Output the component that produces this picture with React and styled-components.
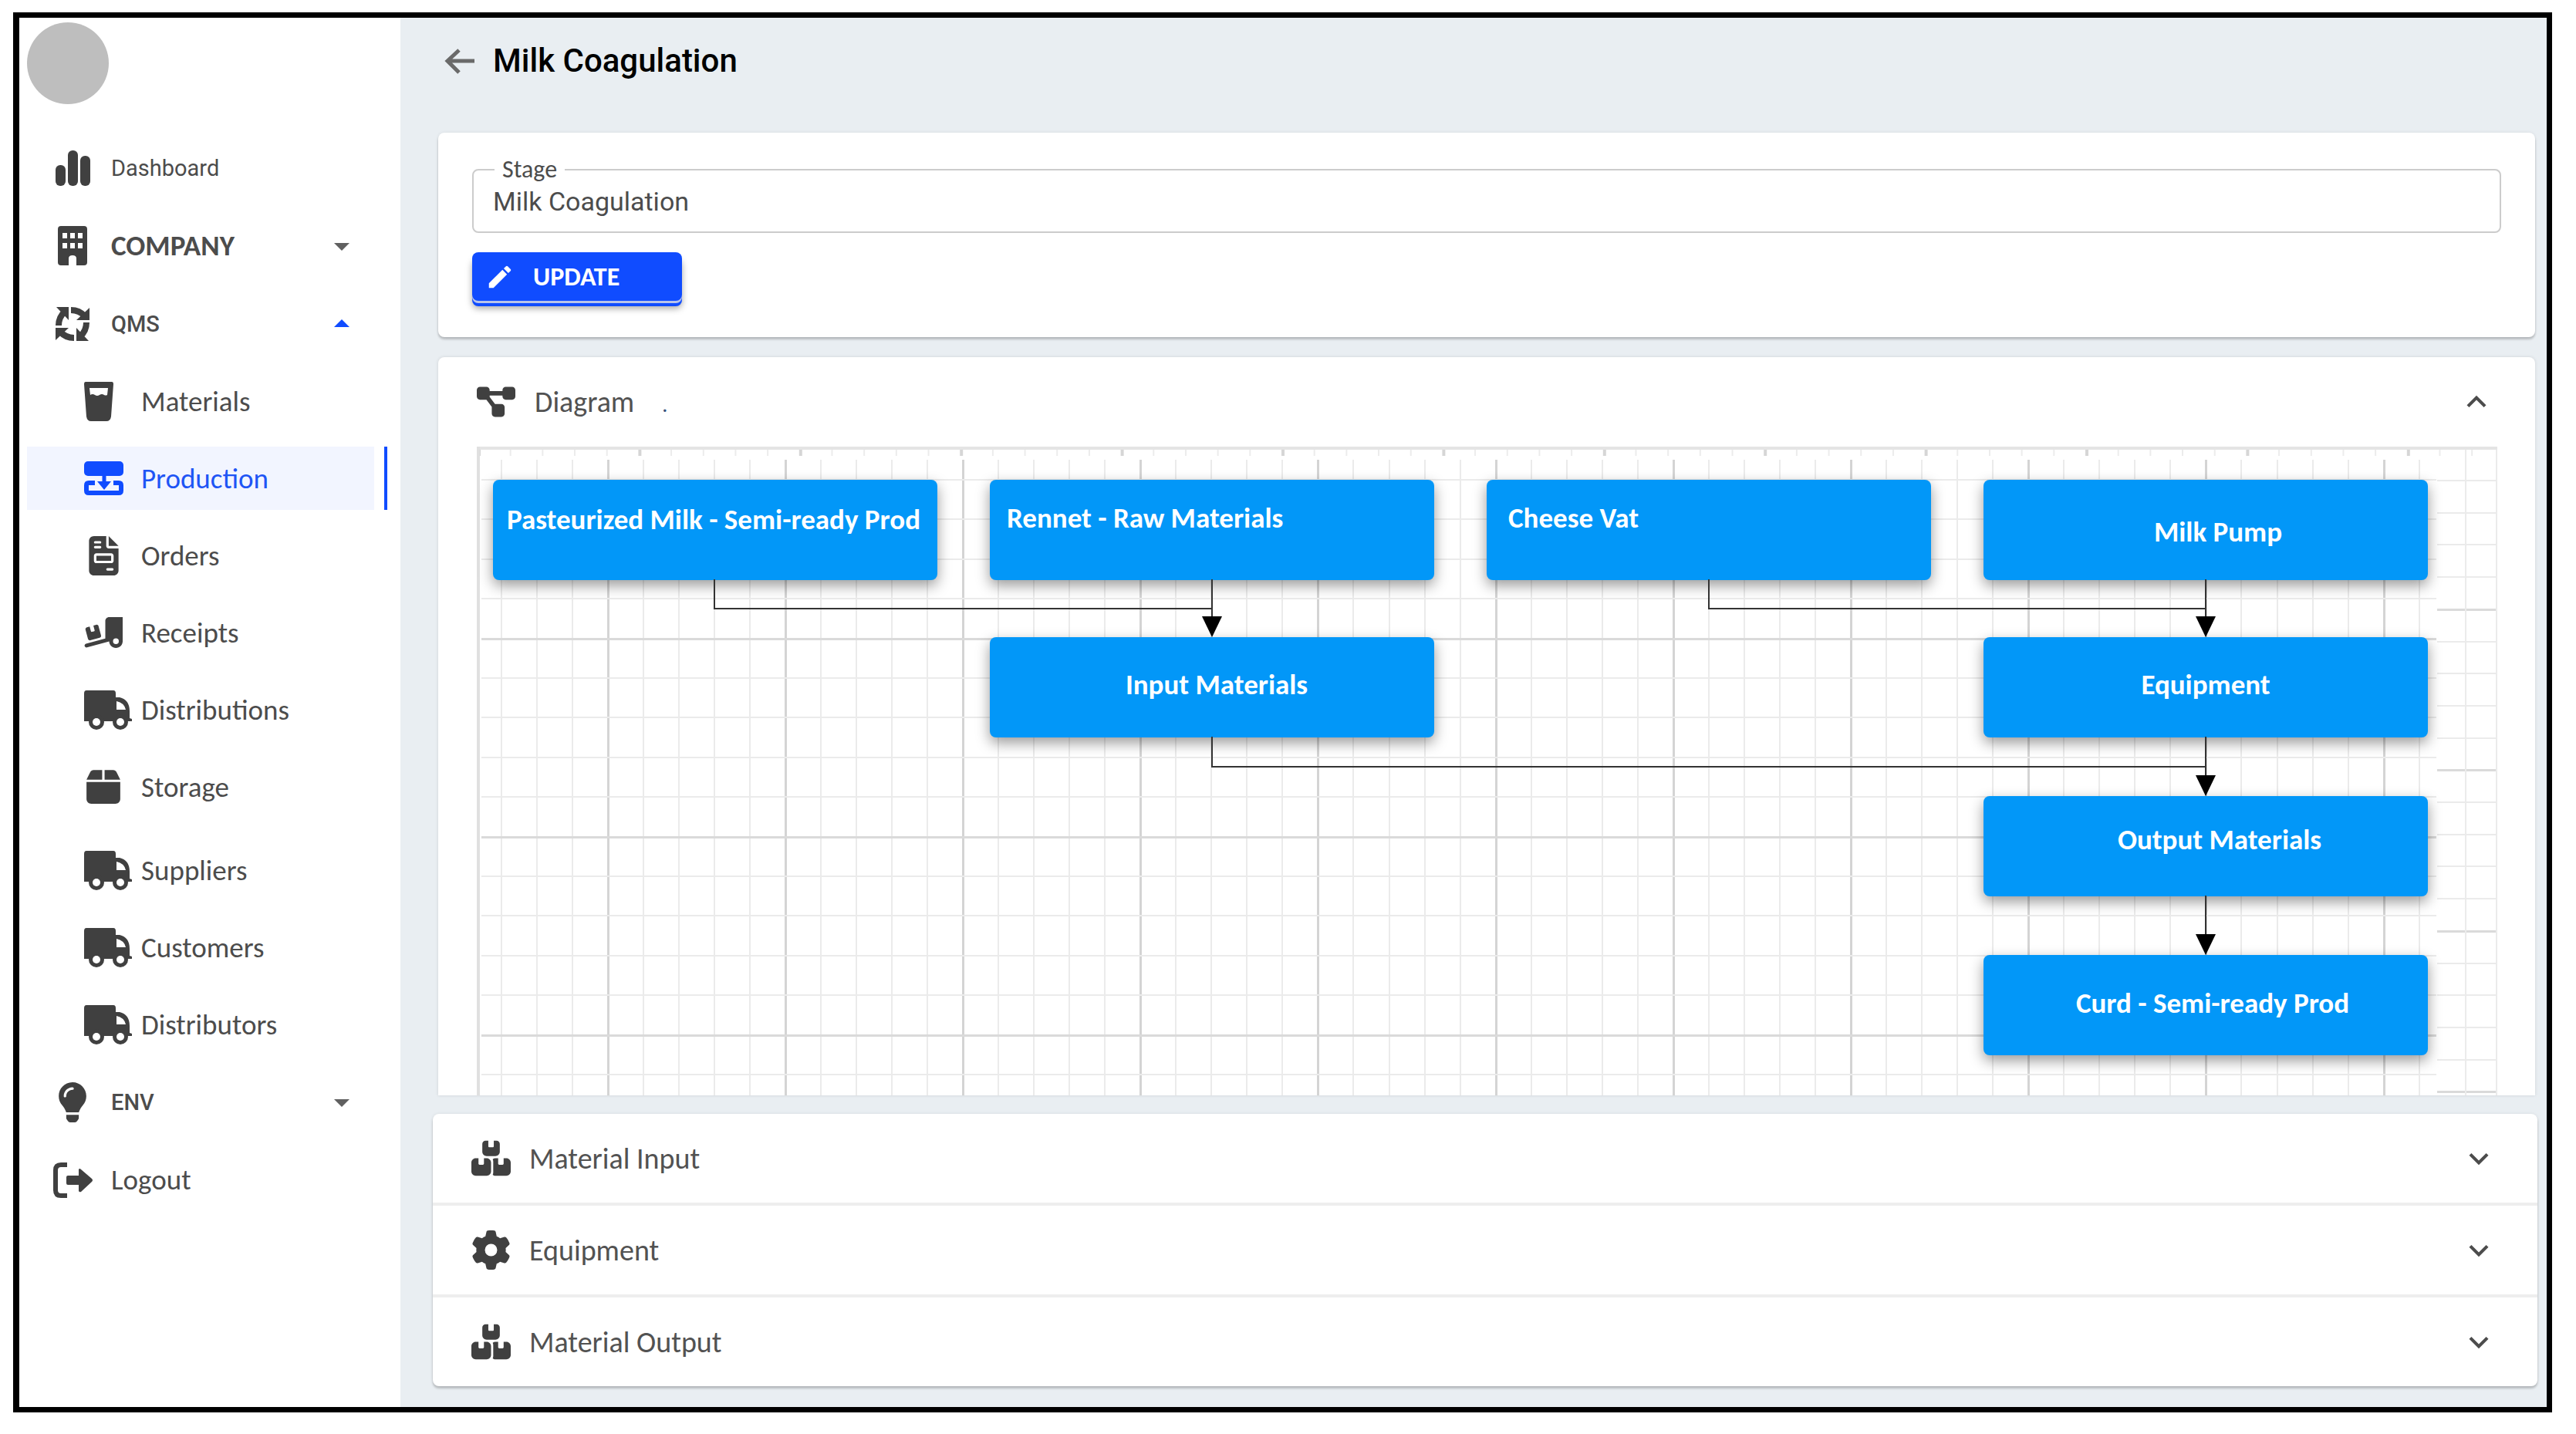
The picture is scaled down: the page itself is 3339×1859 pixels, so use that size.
import React from 'react';
import styled, { createGlobalStyle } from 'styled-components';
import { FaLightbulb } from 'react-icons/fa';
import { FaBox, FaBoxesStacked, FaDiagramProject, FaFileInvoice, FaGear, FaTruckRampBox } from 'react-icons/fa6';
import { MdArrowDropDown, MdArrowDropUp, MdEdit, MdExpandLess, MdExpandMore } from 'react-icons/md';

const GlobalStyle = createGlobalStyle`
  * {
    box-sizing: border-box;
  }

  body {
    margin: 0;
    background: #ffffff;
    color: #4c4c4c;
    font-family: Carlito, Lato, sans-serif;
    font-size: 37px;
  }

  button,
  input {
    font: inherit;
    color: inherit;
    background: none;
    border: none;
    padding: 0;
  }

  button {
    cursor: pointer;
  }

  svg {
    display: block;
    flex: none;
  }
`;

const Frame = styled.div`
  display: flex;
  margin: 16px 31px 28px 17px;
  border: 7px solid #000000;
  border-left-width: 8px;
`;

/* Sidebar */

const Sidebar = styled.nav`
  flex: none;
  width: 494px;
  padding-top: 6px;
  background: #ffffff;
`;

const Avatar = styled.div`
  width: 106px;
  height: 106px;
  margin: 0 0 32px 10px;
  border-radius: 50%;
  background: #bebebe;
`;

const NavList = styled.ul`
  list-style: none;
  margin: 0;
  padding: 0;
`;

const SubList = styled(NavList)`
  & + & {
    margin-top: 8px;
  }
`;

const NavItem = styled.li`
  display: flex;
  align-items: center;
  gap: 13px;
  height: ${({ $sub }) => ($sub ? 100 : 101)}px;
  padding: 0 17px 0 10px;
`;

const NavLink = styled.a`
  flex: 1;
  display: flex;
  align-items: center;
  height: 82px;
  padding: 0 18px 0 ${({ $sub }) => ($sub ? 74 : 33)}px;
  background: ${({ $active }) => ($active ? '#f2f5ff' : 'transparent')};
  color: ${({ $active }) => ($active ? '#1f55f5' : '#4c4c4c')};
  text-align: left;
  text-decoration: none;
`;

const NavIcon = styled.span`
  display: flex;
  justify-content: ${({ $sub }) => ($sub ? 'flex-start' : 'center')};
  width: ${({ $sub }) => ($sub ? 62 : 52)}px;
  margin-right: ${({ $sub }) => ($sub ? 12 : 24)}px;
  color: ${({ $active }) => ($active ? '#104cff' : '#404040')};

  svg {
    width: auto;
    height: ${({ $height }) => $height}px;
  }
`;

const NavText = styled.span`
  flex: 1;
  font-family: ${({ $kind }) => ($kind === 'roboto' || $kind === 'robotoMedium' ? 'Roboto, sans-serif' : 'inherit')};
  font-size: ${({ $kind }) => ($kind === 'roboto' || $kind === 'robotoMedium' ? 29 : 37)}px;
  font-weight: ${({ $kind }) => ({ bold: 700, robotoMedium: 500 }[$kind] || 400)};
`;

const Caret = styled.span`
  color: ${({ $open }) => ($open ? '#104cff' : '#606060')};
`;

const ActiveMarker = styled.span`
  width: 4px;
  height: 82px;
  background: ${({ $active }) => ($active ? '#104cff' : 'transparent')};
`;

/* Main column */

const Main = styled.main`
  flex: 1;
  min-width: 0;
  padding: 0 15px 27px 49px;
  background: #e9eef2;
`;

const PageHeader = styled.header`
  display: flex;
  align-items: center;
  gap: 24px;
  padding: 28px 0 65px 8px;
`;

const BackButton = styled.button`
  color: #6a6a6a;
`;

const PageTitle = styled.h1`
  margin: 0;
  color: #000000;
  font-family: Roboto, sans-serif;
  font-size: 42px;
  font-weight: 500;
  line-height: 56px;
`;

const Card = styled.section`
  background: #ffffff;
  border-radius: 8px;
  box-shadow: 0 3px 3px rgba(0, 0, 0, 0.2), 0 0 4px rgba(0, 0, 0, 0.08);
`;

const StageCard = styled(Card)`
  padding: 32px 44px 47px;
`;

const Field = styled.fieldset`
  margin: 0;
  padding: 0 25px;
  border: 2px solid #cccccc;
  border-radius: 8px;
`;

const FieldLabel = styled.legend`
  margin-left: 2px;
  padding: 0 10px;
  font-size: 32px;
  line-height: 32px;
`;

const FieldInput = styled.input`
  display: block;
  width: 100%;
  height: 64px;
  padding-bottom: 14px;
  font-family: Roboto, sans-serif;
  font-size: 34px;
  outline: none;
`;

const UpdateButton = styled.button`
  display: flex;
  align-items: center;
  gap: 24px;
  min-width: 272px;
  height: 63px;
  margin-top: 25px;
  padding: 0 17px;
  border-radius: 8px;
  background: #104cff;
  color: #ffffff;
  font-size: 34px;
  font-weight: 700;
  box-shadow: 0 3px 0 #b9c4ea, 0 7px 0 #104cff, 0 10px 8px rgba(0, 0, 0, 0.35);
`;

const DiagramCard = styled(Card)`
  margin-top: 26px;
  border-radius: 8px 8px 0 0;
  box-shadow: 0 0 4px rgba(0, 0, 0, 0.12);
`;

const AccordionCard = styled(Card)`
  margin: 24px -3px 0 -7px;
`;

const AccordionHeader = styled.button`
  display: flex;
  align-items: center;
  gap: 17px;
  width: 100%;
  height: ${({ $open }) => ($open ? 116 : 115)}px;
  padding: 0 51px 0 50px;
  font-size: 38px;
  text-align: left;
`;

const AccordionRow = styled.div`
  & + & {
    border-top: 4px solid #eeeeee;
  }
`;

const AccordionIcon = styled.span`
  width: 58px;
  color: #404040;

  svg {
    width: auto;
    height: ${({ $height }) => $height}px;
  }
`;

const AccordionTitle = styled.span`
  flex: 1;
  color: #525252;
`;

const TitleDot = styled.span`
  margin-left: 36px;
  font-size: 28px;
  color: #33507a;
`;

/* Diagram */

const Canvas = styled.div`
  position: relative;
  height: 841px;
  margin: 0 49px 0 50px;
  overflow: hidden;
`;

const CanvasLayer = styled.svg`
  position: absolute;
  inset: 0;
  width: 100%;
  height: 100%;
`;

const Node = styled.div`
  position: absolute;
  left: ${({ $x }) => $x}px;
  top: ${({ $y }) => $y}px;
  display: flex;
  align-items: ${({ $lifted }) => ($lifted ? 'flex-start' : 'center')};
  justify-content: ${({ $align }) => $align || 'center'};
  width: 576px;
  height: 130px;
  padding: ${({ $pad }) => $pad};
  border-radius: 8px;
  background: #0297f8;
  box-shadow: 0 7px 18px rgba(0, 0, 0, 0.4);
  color: #ffffff;
  font-weight: 700;
  line-height: 48px;
  white-space: nowrap;
`;

const BarsIcon = () => (
  <svg viewBox="0 0 45 46" fill="currentColor">
    <rect x="0" y="19" width="13" height="27" rx="6" />
    <rect x="16" y="0" width="13" height="46" rx="6" />
    <rect x="32" y="7" width="13" height="39" rx="6" />
  </svg>
);

const BuildingIcon = () => (
  <svg viewBox="0 0 38 51" fill="currentColor" fillRule="evenodd">
    <path d="M4 0H34Q38 0 38 4V47Q38 51 34 51H24V42Q24 38 19 38Q14 38 14 42V51H4Q0 51 0 47V4Q0 0 4 0ZM6 9V16H12V9ZM16 9V16H22V9ZM26 9V16H32V9ZM6 22V29H12V22ZM16 22V29H22V22ZM26 22V29H32V22Z" />
  </svg>
);

const CycleIcon = () => (
  <svg viewBox="0 0 44 44">
    {[0, 90, 180, 270].map((angle) => (
      <g key={angle} transform={`rotate(${angle} 22 22)`}>
        <path d="M20 4Q31 4 38 12" fill="none" stroke="currentColor" strokeWidth="8" />
        <path d="M44 1V17H27Z" fill="currentColor" />
      </g>
    ))}
  </svg>
);

const CupIcon = () => (
  <svg viewBox="0 0 38 51" fill="currentColor" fillRule="evenodd">
    <path d="M2 0H36Q38 0 38 3L35 45Q34 51 29 51H9Q4 51 3 45L0 3Q0 0 2 0ZM7 8L8 17Q11 15 14 17Q17 19 20 17Q23 15 26 17Q28 18 30 17L31 8Z" />
  </svg>
);

const ProductionIcon = () => (
  <svg viewBox="0 0 51 44">
    <rect x="0" y="0" width="51" height="19" rx="5" fill="currentColor" />
    <path d="M26 18V28" stroke="currentColor" strokeWidth="5" />
    <path d="M17 26H35L26 37Z" fill="currentColor" />
    <path d="M14 28H6Q3 28 3 31V38Q3 41 6 41H45Q48 41 48 38V31Q48 28 45 28H38" fill="none" stroke="currentColor" strokeWidth="6" />
  </svg>
);

const TruckIcon = () => (
  <svg viewBox="0 0 62 51" fill="currentColor">
    <path fillRule="evenodd" d="M3 0H38Q41 0 41 4V9H46Q59 12 59 27V36L62 37V40H0V4Q0 0 3 0ZM42 14V25H54Q52 16 42 14Z" />
    <circle cx="16" cy="41" r="10" />
    <circle cx="47" cy="41" r="10" />
    <circle cx="16" cy="41" r="5" fill="#ffffff" />
    <circle cx="47" cy="41" r="5" fill="#ffffff" />
  </svg>
);

const LogoutIcon = () => (
  <svg viewBox="0 0 51 46">
    <path d="M18 3H10Q3 3 3 10V36Q3 43 10 43H18" fill="none" stroke="currentColor" strokeWidth="6" />
    <path d="M19 17H33V9Q34 7 36 9L50 21Q52 23 50 25L36 38Q34 39 33 37V29H19Q17 29 17 27V19Q17 17 19 17Z" fill="currentColor" />
  </svg>
);

const BackIcon = () => (
  <svg width="39" height="33" viewBox="0 0 39 33" fill="none" stroke="currentColor" strokeWidth="5">
    <path d="M39 16H4M19 2L4 16L19 31" />
  </svg>
);

const topItems = [
  { label: 'Dashboard', icon: <BarsIcon />, height: 46, kind: 'roboto' },
  { label: 'COMPANY', icon: <BuildingIcon />, height: 51, kind: 'bold', group: true },
  { label: 'QMS', icon: <CycleIcon />, height: 44, kind: 'robotoMedium', group: true, open: true },
];

const stockItems = [
  { label: 'Materials', icon: <CupIcon />, height: 51 },
  { label: 'Production', icon: <ProductionIcon />, height: 44, active: true },
  { label: 'Orders', icon: <FaFileInvoice />, height: 51 },
  { label: 'Receipts', icon: <FaTruckRampBox />, height: 50 },
  { label: 'Distributions', icon: <TruckIcon />, height: 51 },
  { label: 'Storage', icon: <FaBox />, height: 50 },
];

const partnerItems = [
  { label: 'Suppliers', icon: <TruckIcon />, height: 51 },
  { label: 'Customers', icon: <TruckIcon />, height: 51 },
  { label: 'Distributors', icon: <TruckIcon />, height: 51 },
];

const bottomItems = [
  { label: 'ENV', icon: <FaLightbulb />, height: 52, kind: 'robotoMedium', group: true },
  { label: 'Logout', icon: <LogoutIcon />, height: 46 },
];

const accordions = [
  { label: 'Material Input', icon: <FaBoxesStacked /> },
  { label: 'Equipment', icon: <FaGear /> },
  { label: 'Material Output', icon: <FaBoxesStacked /> },
];

const nodes = [
  { label: 'Pasteurized Milk - Semi-ready Prod', x: 21, y: 43, lifted: true, pad: '28px 4px 0 0' },
  { label: 'Rennet - Raw Materials', x: 665, y: 43, lifted: true, align: 'flex-start', pad: '26px 22px' },
  { label: 'Cheese Vat', x: 1309, y: 43, lifted: true, align: 'flex-start', pad: '26px 28px' },
  { label: 'Milk Pump', x: 1953, y: 43, pad: '6px 0 0 32px' },
  { label: 'Input Materials', x: 665, y: 247, pad: '0 0 6px 12px' },
  { label: 'Equipment', x: 1953, y: 247, pad: '0 0 6px 0' },
  { label: 'Output Materials', x: 1953, y: 453, pad: '0 0 16px 36px' },
  { label: 'Curd - Semi-ready Prod', x: 1953, y: 659, pad: '0 0 4px 18px' },
];

const edges = [
  'M308 172V210H953',
  'M953 172V226',
  'M1597 172V210H2241',
  'M2241 172V226',
  'M953 376V415H2241',
  'M2241 376V432',
  'M2241 582V638',
];

const arrows = [
  { x: 953, y: 247 },
  { x: 2241, y: 247 },
  { x: 2241, y: 453 },
  { x: 2241, y: 659 },
];

const range = (count) => Array.from({ length: count }, (_, i) => i);

function NavEntry({ item, sub }) {
  const { label, icon, height, kind, group, open, active } = item;
  return (
    <NavItem $sub={sub}>
      <NavLink
        as={group ? 'button' : 'a'}
        href={group ? undefined : `#${label.toLowerCase()}`}
        aria-expanded={group ? Boolean(open) : undefined}
        aria-current={active ? 'page' : undefined}
        $sub={sub}
        $active={active}
      >
        <NavIcon $sub={sub} $active={active} $height={height}>{icon}</NavIcon>
        <NavText $kind={kind}>{label}</NavText>
        {group && (
          <Caret $open={open}>
            {open ? <MdArrowDropUp size={48} /> : <MdArrowDropDown size={48} />}
          </Caret>
        )}
      </NavLink>
      <ActiveMarker $active={active} />
    </NavItem>
  );
}

function Grid() {
  return (
    <CanvasLayer aria-hidden="true">
      {/* ruler */}
      {range(63).map((i) => (
        <rect key={i} x={1 + (i * 1042) / 25} y="4" width={i % 5 ? 2 : 4} height="8" fill={i % 5 ? '#ececec' : '#d6d6d6'} />
      ))}
      {/* main grid */}
      {range(55).map((i) => {
        const major = i % 5 === 3;
        return <rect key={i} x={31 + i * 46 + Math.floor(i / 25)} y="17" width={major ? 3 : 2} height="824" fill={major ? '#d4d4d4' : '#ebebeb'} />;
      })}
      {range(16).map((i) => {
        const major = i % 5 === 4;
        return <rect key={i} x="6" y={42 + Math.round(i * 51.4)} width="2534" height={major ? 3 : 2} fill={major ? '#dadada' : '#ebebeb'} />;
      })}
      {/* strip past the last column */}
      {range(20).map((i) => {
        const major = i % 5 === 4;
        return <rect key={i} x="2541" y={43 + Math.round(i * 41.7)} width="79" height={major ? 3 : 2} fill={major ? '#dadada' : '#ebebeb'} />;
      })}
      <rect x="2577" y="4" width="2" height="837" fill="#ebebeb" />
      <rect x="2617" y="4" width="2" height="837" fill="#ebebeb" />
      <rect x="0" y="0" width="100%" height="4" fill="#e4e4e4" />
      <rect x="0" y="0" width="4" height="841" fill="#e0e0e0" />
    </CanvasLayer>
  );
}

function Diagram() {
  return (
    <Canvas>
      <Grid />
      {nodes.map((n) => (
        <Node key={n.label} $x={n.x} $y={n.y} $lifted={n.lifted} $align={n.align} $pad={n.pad}>
          {n.label}
        </Node>
      ))}
      <CanvasLayer aria-hidden="true">
        {edges.map((d) => (
          <path key={d} d={d} fill="none" stroke="#333333" strokeWidth="2" />
        ))}
        {arrows.map(({ x, y }) => (
          <path key={`${x}-${y}`} d={`M${x - 13} ${y - 27}H${x + 13}L${x} ${y}Z`} fill="#000000" />
        ))}
      </CanvasLayer>
    </Canvas>
  );
}

function App() {
  return (
    <>
      <GlobalStyle />
      <Frame>
        <Sidebar>
          <Avatar />
          <NavList>
            {topItems.map((item) => <NavEntry key={item.label} item={item} />)}
          </NavList>
          <SubList>
            {stockItems.map((item) => <NavEntry key={item.label} item={item} sub />)}
          </SubList>
          <SubList>
            {partnerItems.map((item) => <NavEntry key={item.label} item={item} sub />)}
          </SubList>
          <NavList>
            {bottomItems.map((item) => <NavEntry key={item.label} item={item} />)}
          </NavList>
        </Sidebar>
        <Main>
          <PageHeader>
            <BackButton aria-label="Back"><BackIcon /></BackButton>
            <PageTitle>Milk Coagulation</PageTitle>
          </PageHeader>
          <StageCard>
            <Field>
              <FieldLabel><label htmlFor="stage">Stage</label></FieldLabel>
              <FieldInput id="stage" type="text" defaultValue="Milk Coagulation" />
            </Field>
            <UpdateButton type="button">
              <MdEdit size={38} />
              UPDATE
            </UpdateButton>
          </StageCard>
          <DiagramCard>
            <AccordionHeader $open aria-expanded="true">
              <AccordionIcon $height={50}><FaDiagramProject /></AccordionIcon>
              <AccordionTitle>
                Diagram
                <TitleDot>.</TitleDot>
              </AccordionTitle>
              <MdExpandLess size={50} />
            </AccordionHeader>
            <Diagram />
          </DiagramCard>
          <AccordionCard>
            {accordions.map(({ label, icon }) => (
              <AccordionRow key={label}>
                <AccordionHeader aria-expanded="false">
                  <AccordionIcon $height={51}>{icon}</AccordionIcon>
                  <AccordionTitle>{label}</AccordionTitle>
                  <MdExpandMore size={50} />
                </AccordionHeader>
              </AccordionRow>
            ))}
          </AccordionCard>
        </Main>
      </Frame>
    </>
  );
}

export default App;
